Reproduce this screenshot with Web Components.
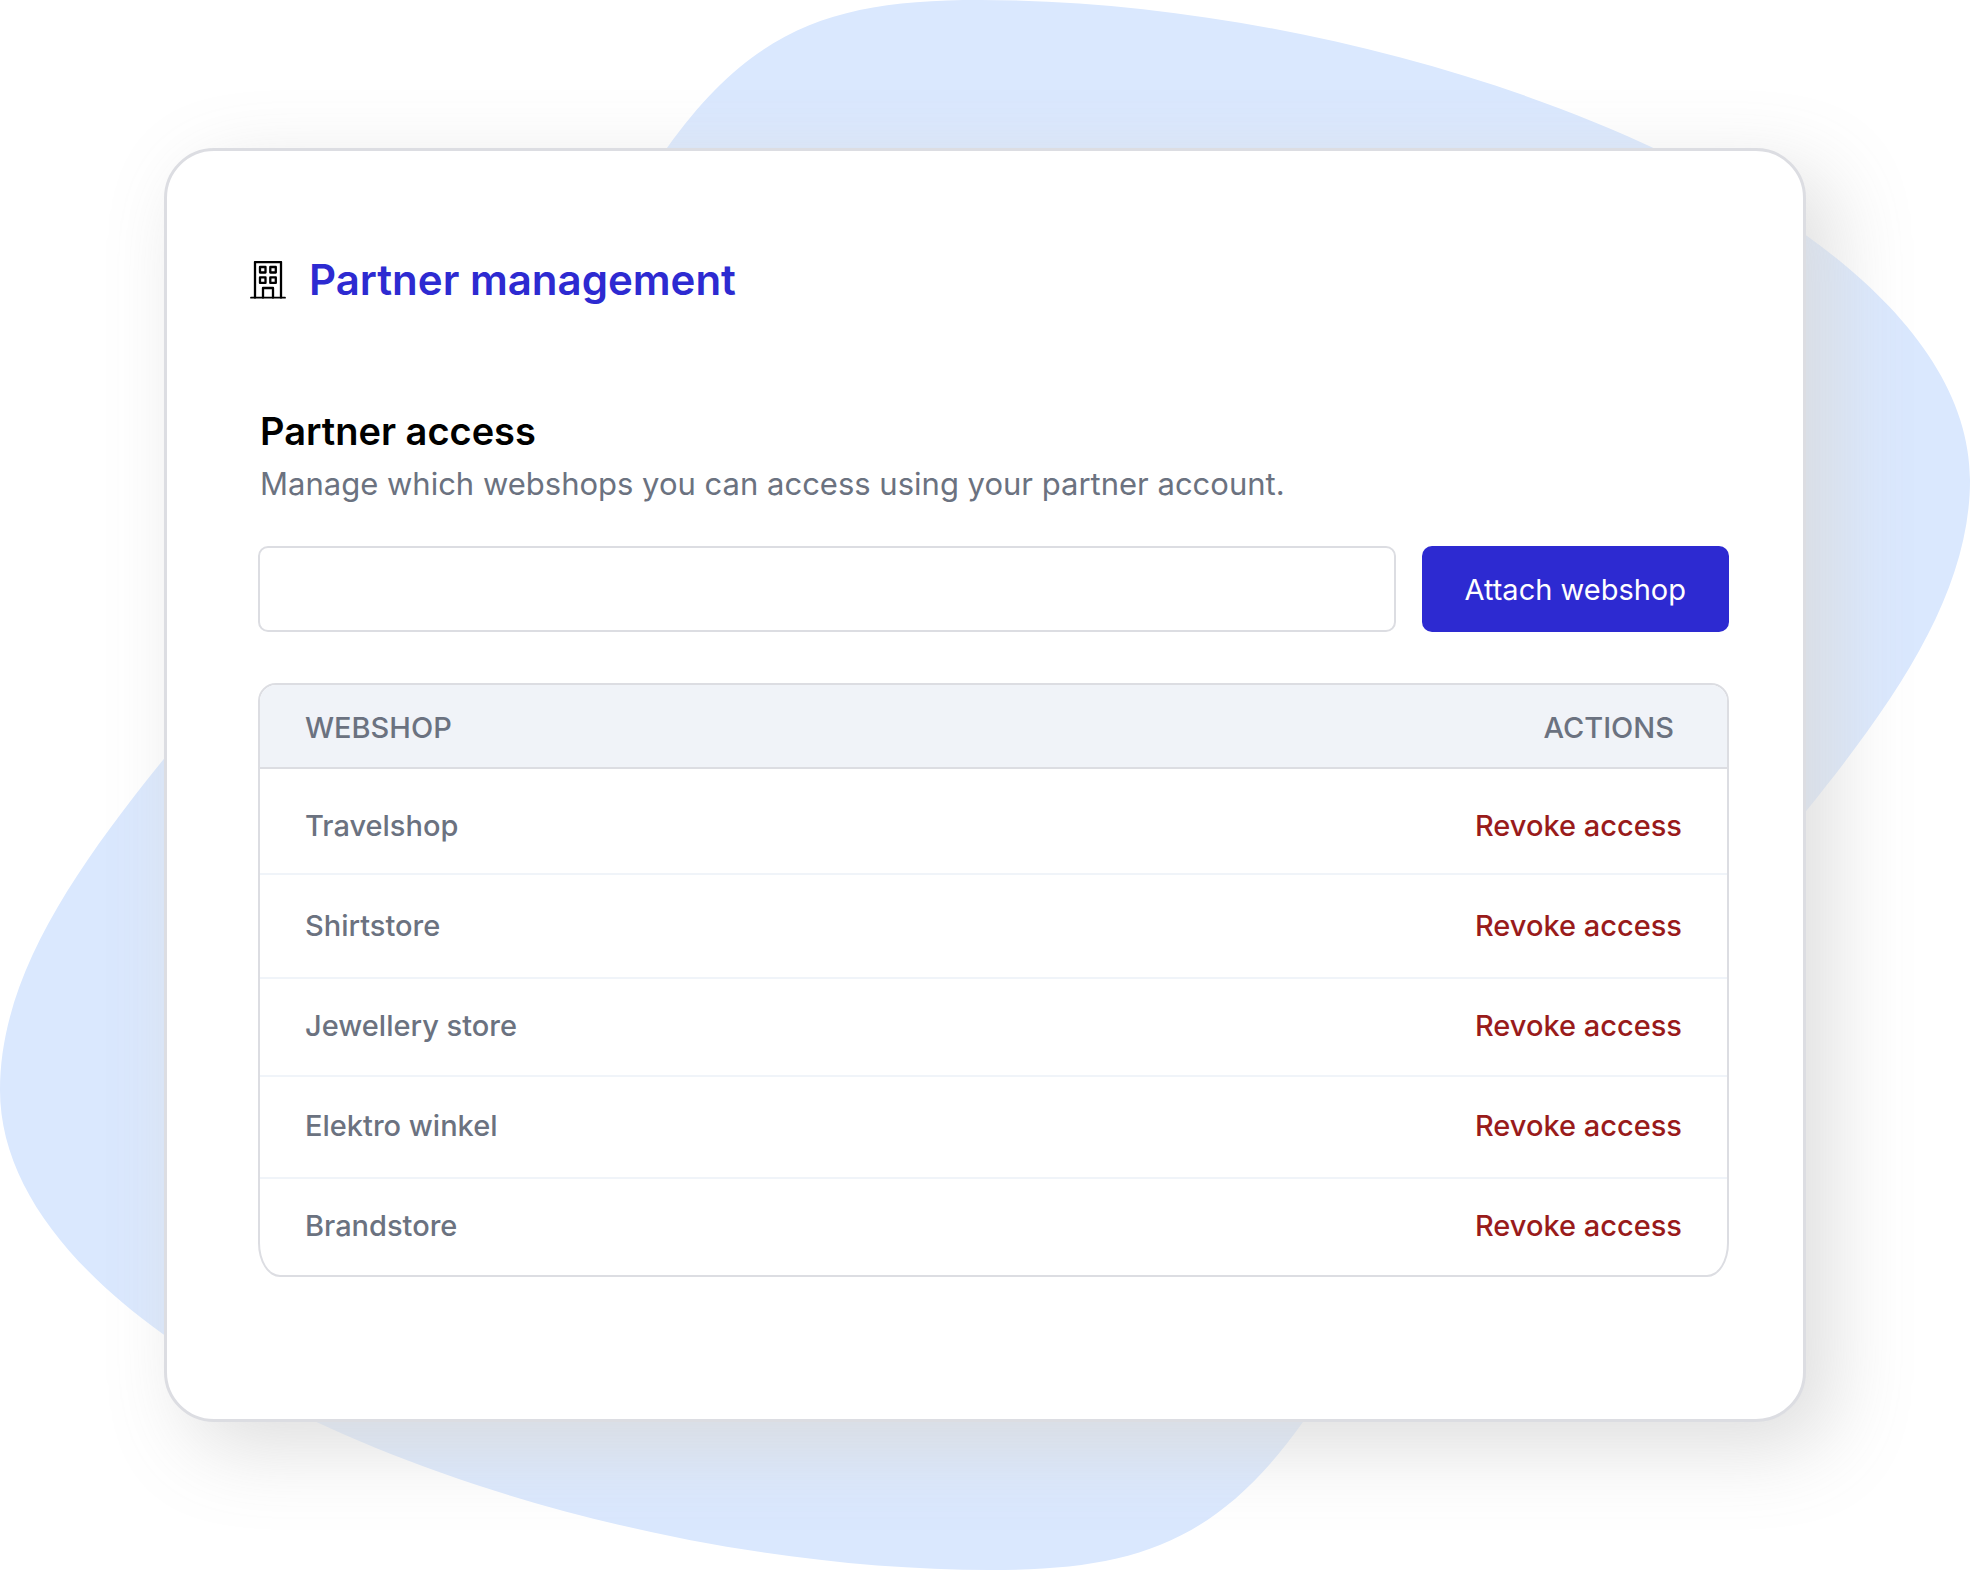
<!DOCTYPE html>
<html lang="en">
<head>
<meta charset="utf-8">
<meta name="viewport" content="width=device-width, initial-scale=1">
<title>Partner management</title>
<style>
  :root {
    --brand: #2d2ad1;
    --line: #dcdde2;
    --line-soft: #f0f4f9;
    --muted: #6b7280;
    --danger: #991b1b;
    --head: #f0f3f8;
    --blob: #dae8fe;
  }
  body {
    margin: 0;
    background: #fff;
    color: #000;
    font-family: Inter, "Liberation Sans", sans-serif;
  }
</style>
</head>
<body>
<blob-stage>
  <partner-card>
    <page-title slot="title">Partner management</page-title>
    <access-section heading="Partner access" description="Manage which webshops you can access using your partner account.">
      <attach-form label="Attach webshop"></attach-form>
      <webshop-table shops="Travelshop|Shirtstore|Jewellery store|Elektro winkel|Brandstore"></webshop-table>
    </access-section>
  </partner-card>
</blob-stage>

<script>
  const define = (name, render) => customElements.define(name, class extends HTMLElement {
    constructor() {
      super();
      this.attachShadow({ mode: "open" });
    }
    connectedCallback() {
      this.shadowRoot.innerHTML = render(this);
    }
  });

  // Soft blue shape behind the card
  define("blob-stage", () => `
    <style>
      :host { display: grid; grid-template-columns: minmax(0, 1fr); overflow: hidden; }
      svg, main { grid-area: 1 / 1; }
      svg { display: block; width: 100%; height: auto; }
      main { margin: 148px 164px; min-width: 0; }
    </style>
    <svg viewBox="0 0 1970 1570" aria-hidden="true">
      <path fill="var(--blob)" d="M667 148C755 24 840 0 980 0C1418 0 1970 217 1970 480C1970 590 1900 695 1807 810L1303 1422C1215 1546 1130 1570 990 1570C552 1570 0 1353 0 1090C0 980 70 875 163 760Z"/>
    </svg>
    <main><slot></slot></main>`);

  define("partner-card", () => `
    <style>
      :host {
        display: block;
        box-sizing: border-box;
        padding: 103px 74px 142px 83px;
        border: 3px solid var(--line);
        border-radius: 50px;
        background: #fff;
        box-shadow: 25px 25px 80px rgba(217, 217, 217, .88);
      }
      .body { margin: 101px 0 0 8px; }
    </style>
    <slot name="title"></slot>
    <div class="body"><slot></slot></div>`);

  define("page-title", () => `
    <style>
      :host { display: flex; align-items: center; gap: 23px; }
      svg { flex: none; width: 36px; height: 38px; }
      h1 { margin: 0; font-size: 42px; line-height: 52px; font-weight: 600; color: var(--brand); }
    </style>
    <svg viewBox="0 0 36 38" fill="none" stroke="#000" stroke-width="2.300" stroke-linejoin="round" stroke-linecap="round" aria-hidden="true">
      <path d="M5 36.500V1.100H31V36.500"/>
      <path stroke-width="1.800" d="M1 36.700H35"/>
      <rect x="10" y="6" width="5.500" height="5.500"/>
      <rect x="20.300" y="6" width="5.500" height="5.500"/>
      <rect x="10" y="16.400" width="5.500" height="5.500"/>
      <rect x="20.300" y="16.400" width="5.500" height="5.500"/>
      <path d="M13 36.500V27H23V36.500"/>
    </svg>
    <h1><slot></slot></h1>`);

  define("access-section", (el) => `
    <style>
      :host { display: block; }
      h2, p { padding-left: 2px; }
      h2 { margin: 0; font-size: 38px; line-height: 48px; font-weight: 600; }
      p { margin: 8px 0 41px; font-size: 31px; line-height: 42px; color: var(--muted); }
      .stack { display: flex; flex-direction: column; gap: 51px; }
    </style>
    <section>
      <h2>${el.getAttribute("heading")}</h2>
      <p>${el.getAttribute("description")}</p>
      <div class="stack"><slot></slot></div>
    </section>`);

  define("attach-form", (el) => `
    <style>
      :host { display: block; }
      form { display: flex; gap: 26px; }
      input, button { box-sizing: border-box; height: 86px; border-radius: 10px; font-family: inherit; font-size: 29px; }
      input { flex: 1; min-width: 0; padding: 0 24px; border: 2px solid var(--line); background: #fff; color: var(--muted); }
      button { flex: none; padding: 0 43px; border: 0; background: var(--brand); color: #fff; font-weight: 400; cursor: pointer; }
    </style>
    <form onsubmit="return false">
      <input type="text" name="webshop" aria-label="Webshop">
      <button type="submit">${el.getAttribute("label")}</button>
    </form>`);

  define("webshop-table", (el) => `
    <style>
      :host {
        display: block;
        overflow: hidden;
        border: 2px solid var(--line);
        border-radius: 18px 18px 22px 22px / 18px 18px 34px 34px;
        color: var(--muted);
        font-size: 29px;
        line-height: 38px;
        font-weight: 500;
      }
      table { width: 100%; border-spacing: 0; border-collapse: separate; }
      th, td { padding: 30px 45px; text-align: left; }
      th { padding: 24px 45px 20px; font-weight: 500; background: var(--head); border-bottom: 2px solid var(--line); }
      th:last-child { padding-right: 53px; }
      th:last-child, td:last-child { text-align: right; }
      td { border-bottom: 2px solid var(--line-soft); }
      tr:nth-child(1) td { padding-top: 38px; padding-bottom: 28px; }
      tr:nth-child(2) td { padding-top: 32px; padding-bottom: 32px; }
      tr:nth-child(3) td { padding-top: 28px; }
      tr:nth-child(4) td { padding-bottom: 32px; }
      tr:last-child td { padding-top: 28px; border-bottom: 0; }
      button { display: inline; padding: 0; border: 0; background: none; font: inherit; color: var(--danger); cursor: pointer; vertical-align: top; }
    </style>
    <table>
      <thead><tr><th scope="col">WEBSHOP</th><th scope="col">ACTIONS</th></tr></thead>
      <tbody>${el.getAttribute("shops").split("|").map((shop) => `
        <tr><td>${shop}</td><td><button type="button">Revoke access</button></td></tr>`).join("")}
      </tbody>
    </table>`);
</script>
</body>
</html>
